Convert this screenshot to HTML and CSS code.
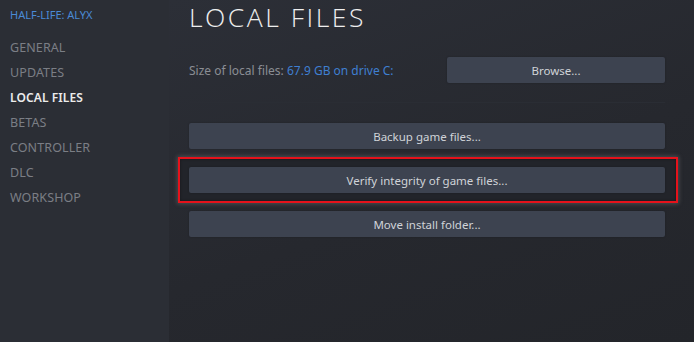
FILE: index.html
```html
<!DOCTYPE html>
<html>
<head>
<meta charset="utf-8">
<link rel="stylesheet" href="styles.css">
</head>
<body>
<div class="app">
  <nav class="sidebar">
    <div class="game">HALF-LIFE: ALYX</div>
    <ul class="menu">
      <li>GENERAL</li>
      <li>UPDATES</li>
      <li class="active">LOCAL FILES</li>
      <li>BETAS</li>
      <li>CONTROLLER</li>
      <li>DLC</li>
      <li>WORKSHOP</li>
    </ul>
  </nav>
  <main class="content">
    <h1 class="title">LOCAL FILES</h1>
    <div class="size-row">
      <div class="size">Size of local files: <span class="link">67.9 GB on drive C:</span></div>
      <button class="btn browse">Browse...</button>
    </div>
    <div class="sep"></div>
    <div class="actions">
      <button class="btn">Backup game files...</button>
      <div class="highlight"><button class="btn">Verify integrity of game files...</button></div>
      <button class="btn">Move install folder...</button>
    </div>
  </main>
</div>
</body>
</html>
```
FILE: styles.css
```css
html, body {
  margin: 0;
  padding: 0;
  width: 694px;
  height: 342px;
  overflow: hidden;
  background: #25272d;
  font-family: "Noto Sans", "Open Sans", sans-serif;
}
.app {
  display: flex;
  height: 342px;
}
.sidebar {
  width: 169px;
  flex: none;
  background: #2b2e35;
  padding: 7px 0 0 10px;
  box-sizing: border-box;
}
.game {
  color: #4a8ad6;
  font-size: 11px;
  line-height: 16px;
}
.menu {
  list-style: none;
  margin: 12px 0 0;
  padding: 0;
}
.menu li {
  color: #7b7e85;
  font-size: 12.5px;
  line-height: 25px;
  height: 25px;
  letter-spacing: 0.1px;
}
.menu li.active {
  color: #ececec;
  font-weight: 600;
  font-size: 12px;
}
.content {
  flex: 1;
  background: linear-gradient(160deg, #2c2f37 0%, #26282e 55%, #23252a 100%);
  padding: 0 29px 0 20px;
  box-sizing: border-box;
}
.title {
  margin: 0;
  padding-top: 2px;
  font-weight: 300;
  font-size: 26.5px;
  line-height: 31px;
  letter-spacing: 2.5px;
  color: #eeeeee;
  font-family: "Open Sans", "Noto Sans", sans-serif;
}
.size-row {
  display: flex;
  align-items: center;
  justify-content: space-between;
  margin-top: 24px;
  height: 26px;
}
.size {
  color: #8b8e94;
  font-size: 12px;
}
.link {
  color: #3f7fd1;
}
.btn {
  display: block;
  border: none;
  border-radius: 2px;
  background: #3d4350;
  color: #d0d3d8;
  font-family: "Noto Sans", "Open Sans", sans-serif;
  font-size: 11.5px;
  height: 26px;
  padding: 0;
  width: 100%;
  text-align: center;
  box-shadow: 0 0 2px rgba(0,0,0,0.25);
}
.browse {
  width: 218px;
}
.sep {
  height: 1px;
  background: #2a2d34;
  margin-top: 19px;
}
.actions {
  margin-top: 20px;
  display: flex;
  flex-direction: column;
}
.highlight {
  margin: 8px -13px 8px -11px;
  padding: 8px 11px 8px 9px;
  border: 2px solid #e5121b;
  box-shadow: 0 0 4px 1px rgba(120,120,120,0.45), inset 0 0 3px rgba(0,0,0,0.4);
  background: #22242a;
}
```
